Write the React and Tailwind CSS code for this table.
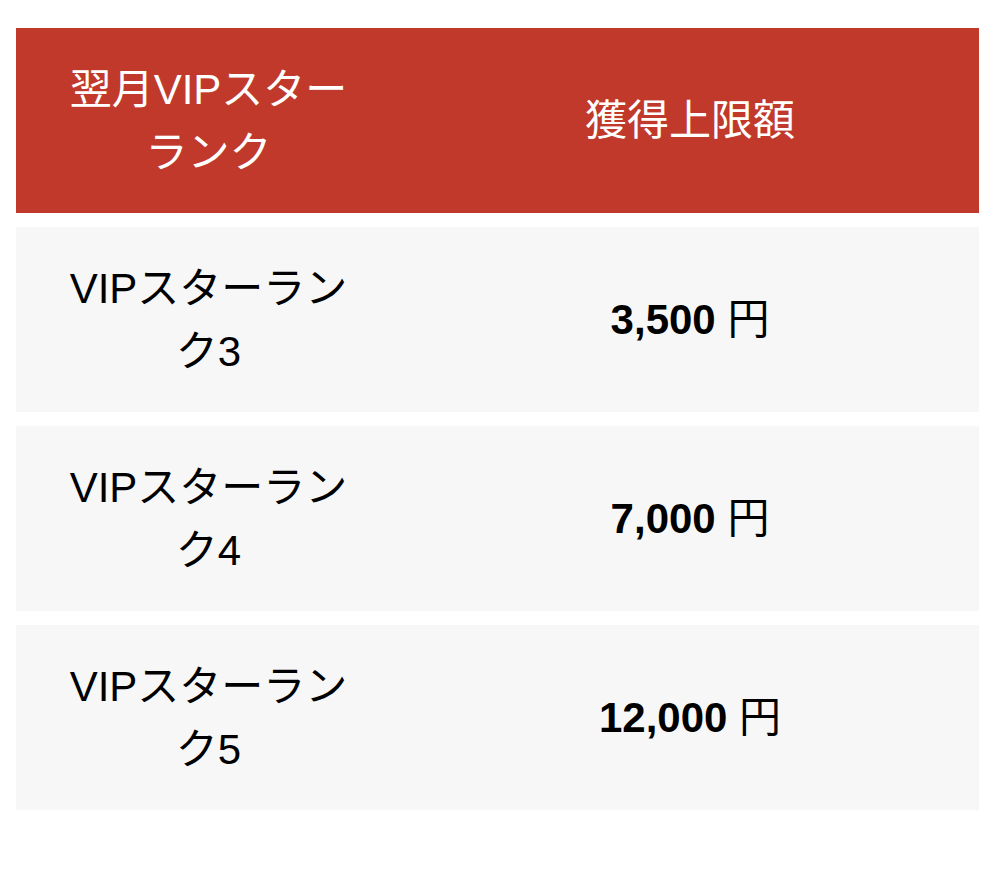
import React from 'react'

const rows = [
  { rank: 'VIPスターランク3', amount: '3,500' },
  { rank: 'VIPスターランク4', amount: '7,000' },
  { rank: 'VIPスターランク5', amount: '12,000' },
]

export default function App() {
  return (
    <div className="min-h-screen bg-white pt-[28px] pl-[16px] font-['Liberation_Sans','Noto_Sans_CJK_JP',sans-serif] text-[42px] leading-[63px]">
      <div className="w-[963px] flex flex-col gap-[14px]">
        {/* header */}
        <div className="grid grid-cols-[385px_1fr] h-[185px] bg-[#c0392b] text-white">
          <div className="flex items-center justify-center px-[42px] text-center">
            翌月VIPスターランク
          </div>
          <div className="flex items-center justify-center text-center">
            獲得上限額
          </div>
        </div>

        {rows.map((r) => (
          <div key={r.rank} className="grid grid-cols-[385px_1fr] h-[185px] bg-[#f7f7f7] text-black">
            <div className="flex items-center justify-center px-[42px] text-center">
              {r.rank}
            </div>
            <div className="flex items-center justify-center text-center">
              <span>
                <span className="font-bold">{r.amount}</span> 円
              </span>
            </div>
          </div>
        ))}
      </div>
    </div>
  )
}
